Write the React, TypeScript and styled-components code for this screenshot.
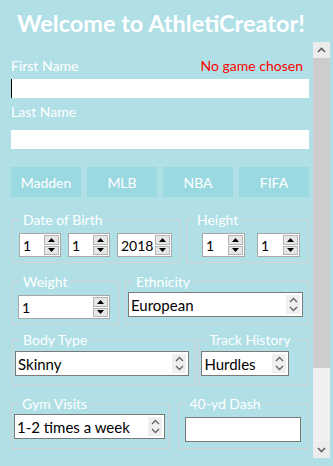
import { FC, ReactElement } from 'react';
import styled, { createGlobalStyle } from 'styled-components';

const GlobalStyle = createGlobalStyle`
    html, body {
        margin: 0;
        padding: 0;
        background: #b0e0e6;
    }
    * {
        box-sizing: border-box;
    }
`;

const Page = styled.div`
    width: 333px;
    height: 466px;
    background: #b0e0e6;
    display: flex;
    flex-direction: column;
    overflow: hidden;
    font-family: Lato, 'Open Sans', sans-serif;
`;

const Title = styled.h1`
    margin: 0;
    height: 42px;
    padding: 9px 0 0 17px;
    font-size: 23.5px;
    line-height: 28px;
    font-weight: 700;
    color: #ffffff;
    white-space: nowrap;
`;

const Body = styled.div`
    display: flex;
    height: 416px;
`;

const ScrollArea = styled.div`
    flex: 1;
    overflow: hidden;
    padding: 0 4px 0 11px;
`;

const ScrollBar = styled.div`
    width: 17px;
    margin-right: 3px;
    display: flex;
    flex-direction: column;
    background: #f0f0f0;
`;

const ScrollArrow = styled.div`
    height: 16px;
    display: flex;
    align-items: center;
    justify-content: center;
    background: #ececec;
`;

const ScrollThumb = styled.div`
    height: 310px;
    background: #cdcdcd;
`;

const ScrollRest = styled.div`
    flex: 1;
`;

const LabelRow = styled.div<{ $top: number }>`
    display: flex;
    justify-content: space-between;
    margin-top: ${(p) => p.$top}px;
    padding-right: 6px;
    height: 18px;
    font-size: 14px;
    line-height: 18px;
`;

const Label = styled.label`
    color: #ffffff;
`;

const ErrorText = styled.span`
    color: #ff0000;
`;

const NameInput = styled.input<{ $top: number; $focused?: boolean }>`
    display: block;
    width: 100%;
    height: 19px;
    margin-top: ${(p) => p.$top}px;
    padding: 0 2px;
    border: none;
    outline: none;
    background: #ffffff;
    font-family: inherit;
    font-size: 14px;
    box-shadow: ${(p) => (p.$focused ? 'inset 1px 0 0 #000000' : 'none')};
`;

const GameRow = styled.div`
    display: grid;
    grid-template-columns: repeat(4, 1fr);
    gap: 6px;
    margin-top: 18px;
`;

const GameButton = styled.button`
    height: 30px;
    border: none;
    background: #9ad9e1;
    color: #ffffff;
    font-family: inherit;
    font-size: 14px;
    padding: 0;
`;

const FieldRow = styled.div<{ $top: number; $gap: number }>`
    display: flex;
    gap: ${(p) => p.$gap}px;
    margin-top: ${(p) => p.$top}px;
`;

const Field = styled.fieldset<{ $w: number; $left?: number }>`
    width: ${(p) => p.$w}px;
    margin: 0 0 0 ${(p) => p.$left ?? 0}px;
    padding: 0;
    border: 1px solid #d4d4d4;
    min-width: 0;
`;

const Legend = styled.legend`
    margin-left: 7px;
    padding: 0 3px;
    font-size: 14px;
    line-height: 15px;
    color: #ffffff;
`;

const FieldBody = styled.div<{ $pad: string; $gap?: number }>`
    display: flex;
    align-items: flex-start;
    gap: ${(p) => p.$gap ?? 0}px;
    padding: ${(p) => p.$pad};
`;

const SpinBox = styled.div<{ $w: number }>`
    width: ${(p) => p.$w}px;
    height: 24px;
    display: flex;
    border: 1px solid #a8a8a8;
    background: #ffffff;
`;

const SpinText = styled.input`
    flex: 1;
    min-width: 0;
    border: none;
    outline: none;
    background: transparent;
    padding: 0 0 0 3px;
    font-family: inherit;
    font-size: 14px;
    color: #000000;
`;

const SpinColumn = styled.div`
    width: 15px;
    margin: 1px 1px 1px 0;
    display: flex;
    flex-direction: column;
    gap: 1px;
`;

const SpinButton = styled.div`
    flex: 1;
    display: flex;
    align-items: center;
    justify-content: center;
    background: #e6e6e6;
    border: 1px solid #b4b4b4;
`;

const SelectBox = styled.div<{ $w: number }>`
    width: ${(p) => p.$w}px;
    height: 25px;
    display: flex;
    border: 1px solid #7a7a7a;
    background: #ffffff;
`;

const Select = styled.select`
    flex: 1;
    min-width: 0;
    appearance: none;
    border: none;
    outline: none;
    background: transparent;
    padding: 0 0 0 2px;
    font-family: inherit;
    font-size: 15px;
    color: #000000;
`;

const Chevrons = styled.div`
    width: 14px;
    margin: 2px 2px 2px 0;
    display: flex;
    align-items: center;
    justify-content: center;
    background: #efefef;
`;

const TextBox = styled.input<{ $w: number }>`
    width: ${(p) => p.$w}px;
    height: 25px;
    border: 1px solid #7a7a7a;
    outline: none;
    background: #ffffff;
    padding: 0 3px;
    font-family: inherit;
    font-size: 15px;
`;

const Triangle: FC<{ down?: boolean }> = ({ down }): ReactElement => (
    <svg width="7" height="4" viewBox="0 0 7 4">
        <path d={down ? 'M0 0 L7 0 L3.5 4 Z' : 'M0 4 L7 4 L3.5 0 Z'} fill="#000" />
    </svg>
);

const Chevron: FC<{ down?: boolean }> = ({ down }): ReactElement => (
    <svg width="9" height="6" viewBox="0 0 9 6">
        <path
            d={down ? 'M1 1 L4.5 4.5 L8 1' : 'M1 5 L4.5 1.5 L8 5'}
            fill="none"
            stroke="#606060"
            strokeWidth="1.6"
        />
    </svg>
);

const Spinner: FC<{ w: number; value: string }> = ({ w, value }): ReactElement => (
    <SpinBox $w={w}>
        <SpinText defaultValue={value} />
        <SpinColumn>
            <SpinButton>
                <Triangle />
            </SpinButton>
            <SpinButton>
                <Triangle down />
            </SpinButton>
        </SpinColumn>
    </SpinBox>
);

const Dropdown: FC<{ w: number; options: string[] }> = ({ w, options }): ReactElement => (
    <SelectBox $w={w}>
        <Select defaultValue={options[0]}>
            {options.map((o) => (
                <option key={o}>{o}</option>
            ))}
        </Select>
        <Chevrons>
            <svg width="9" height="17" viewBox="0 0 9 17">
                <path d="M1 6 L4.5 2.5 L8 6" fill="none" stroke="#666" strokeWidth="1.4" />
                <path d="M1 11 L4.5 14.5 L8 11" fill="none" stroke="#666" strokeWidth="1.4" />
            </svg>
        </Chevrons>
    </SelectBox>
);

const games = ['Madden', 'MLB', 'NBA', 'FIFA'];

export default function App(): ReactElement {
    return (
        <Page>
            <GlobalStyle />
            <Title>Welcome to AthletiCreator!</Title>
            <Body>
                <ScrollArea>
                    <LabelRow $top={15}>
                        <Label>First Name</Label>
                        <ErrorText>No game chosen</ErrorText>
                    </LabelRow>
                    <NameInput $top={4} $focused />
                    <LabelRow $top={5}>
                        <Label>Last Name</Label>
                    </LabelRow>
                    <NameInput $top={9} />

                    <GameRow>
                        {games.map((g) => (
                            <GameButton key={g}>{g}</GameButton>
                        ))}
                    </GameRow>

                    <FieldRow $top={15} $gap={6}>
                        <Field $w={168} $left={1}>
                            <Legend>Date of Birth</Legend>
                            <FieldBody $pad="6px 6px 5px" $gap={7}>
                                <Spinner w={42} value="1" />
                                <Spinner w={42} value="1" />
                                <Spinner w={55} value="2018" />
                            </FieldBody>
                        </Field>
                        <Field $w={123}>
                            <Legend>Height</Legend>
                            <FieldBody $pad="6px 6px 5px 15px" $gap={12}>
                                <Spinner w={43} value="1" />
                                <Spinner w={43} value="1" />
                            </FieldBody>
                        </Field>
                    </FieldRow>

                    <FieldRow $top={11} $gap={6}>
                        <Field $w={107} $left={1}>
                            <Legend>Weight</Legend>
                            <FieldBody $pad="6px 5px 5px">
                                <Spinner w={92} value="1" />
                            </FieldBody>
                        </Field>
                        <Field $w={184}>
                            <Legend>Ethnicity</Legend>
                            <FieldBody $pad="3px 2px 0">
                                <Dropdown w={175} options={['European', 'African', 'Asian', 'Hispanic']} />
                            </FieldBody>
                        </Field>
                    </FieldRow>

                    <FieldRow $top={7} $gap={3}>
                        <Field $w={184} $left={1}>
                            <Legend>Body Type</Legend>
                            <FieldBody $pad="4px 2px 9px">
                                <Dropdown w={174} options={['Skinny', 'Average', 'Muscular', 'Heavy']} />
                            </FieldBody>
                        </Field>
                        <Field $w={111}>
                            <Legend>Track History</Legend>
                            <FieldBody $pad="4px 2px 9px">
                                <Dropdown w={88} options={['Hurdles', 'Sprints', 'Distance', 'None']} />
                            </FieldBody>
                        </Field>
                    </FieldRow>

                    <FieldRow $top={10} $gap={8}>
                        <Field $w={160}>
                            <Legend>Gym Visits</Legend>
                            <FieldBody $pad="3px 2px 9px">
                                <Dropdown
                                    w={151}
                                    options={['1-2 times a week', '3-4 times a week', 'Daily', 'Never']}
                                />
                            </FieldBody>
                        </Field>
                        <Field $w={131}>
                            <Legend>40-yd Dash</Legend>
                            <FieldBody $pad="6px 6px 6px">
                                <TextBox $w={116} />
                            </FieldBody>
                        </Field>
                    </FieldRow>
                </ScrollArea>
                <ScrollBar>
                    <ScrollArrow>
                        <Chevron />
                    </ScrollArrow>
                    <ScrollThumb />
                    <ScrollRest />
                    <ScrollArrow>
                        <Chevron down />
                    </ScrollArrow>
                </ScrollBar>
            </Body>
        </Page>
    );
}
